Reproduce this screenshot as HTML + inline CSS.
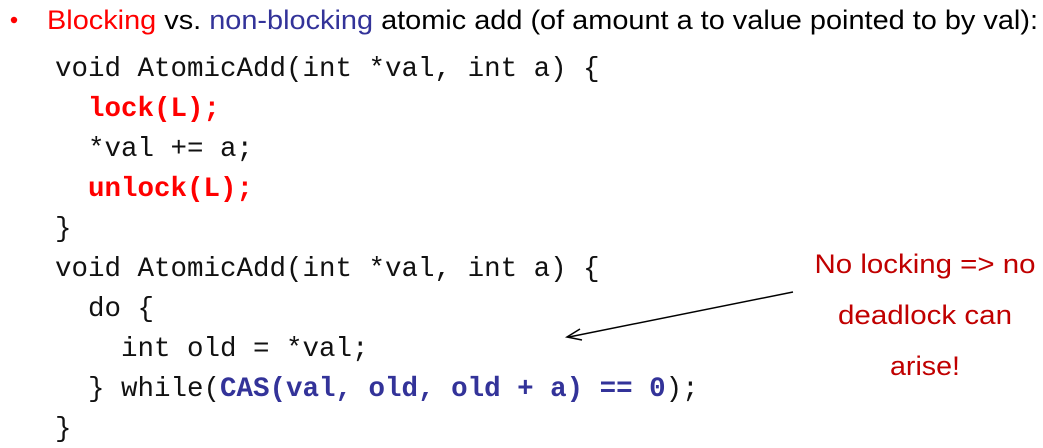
<!DOCTYPE html>
<html><head><style>html,body{margin:0;padding:0;background:#fff;width:1043px;height:448px;overflow:hidden}</style></head>
<body>
<svg width="1043" height="448" xmlns="http://www.w3.org/2000/svg">
<circle cx="14" cy="20" r="3.2" fill="#ff0000"/>
<text x="47" y="29" font-family="Liberation Sans, sans-serif" font-size="27" textLength="991" lengthAdjust="spacingAndGlyphs" fill="#000"><tspan fill="#ff0000">Blocking</tspan> vs. <tspan fill="#333399">non-blocking</tspan> atomic add (of amount a to value pointed to by val):</text>
<g font-family="Liberation Mono, monospace" font-size="27.5" fill="#111" xml:space="preserve">
<text x="55" y="76">void AtomicAdd(int *val, int a) {</text>
<text x="88" y="116" fill="#ff0000" font-weight="bold">lock(L);</text>
<text x="88" y="156">*val += a;</text>
<text x="88" y="196" fill="#ff0000" font-weight="bold">unlock(L);</text>
<text x="55" y="236">}</text>
<text x="55" y="276">void AtomicAdd(int *val, int a) {</text>
<text x="88" y="316">do {</text>
<text x="121" y="356">int old = *val;</text>
<text x="88" y="396">} while(<tspan fill="#333399" font-weight="bold">CAS(val, old, old + a) == 0</tspan>);</text>
<text x="55" y="436">}</text>
</g>
<g font-family="Liberation Sans, sans-serif" font-size="27" fill="#c00000" text-anchor="middle">
<text x="925" y="273" textLength="221" lengthAdjust="spacingAndGlyphs">No locking =&gt; no</text>
<text x="925" y="324" textLength="174" lengthAdjust="spacingAndGlyphs">deadlock can</text>
<text x="925" y="375" textLength="70" lengthAdjust="spacingAndGlyphs">arise!</text>
</g>
<line x1="793" y1="292" x2="569" y2="337" stroke="#000" stroke-width="1.5"/>
<path d="M580 329 L567 337 L582 340" fill="none" stroke="#000" stroke-width="1.5"/>
</svg>
</body></html>
